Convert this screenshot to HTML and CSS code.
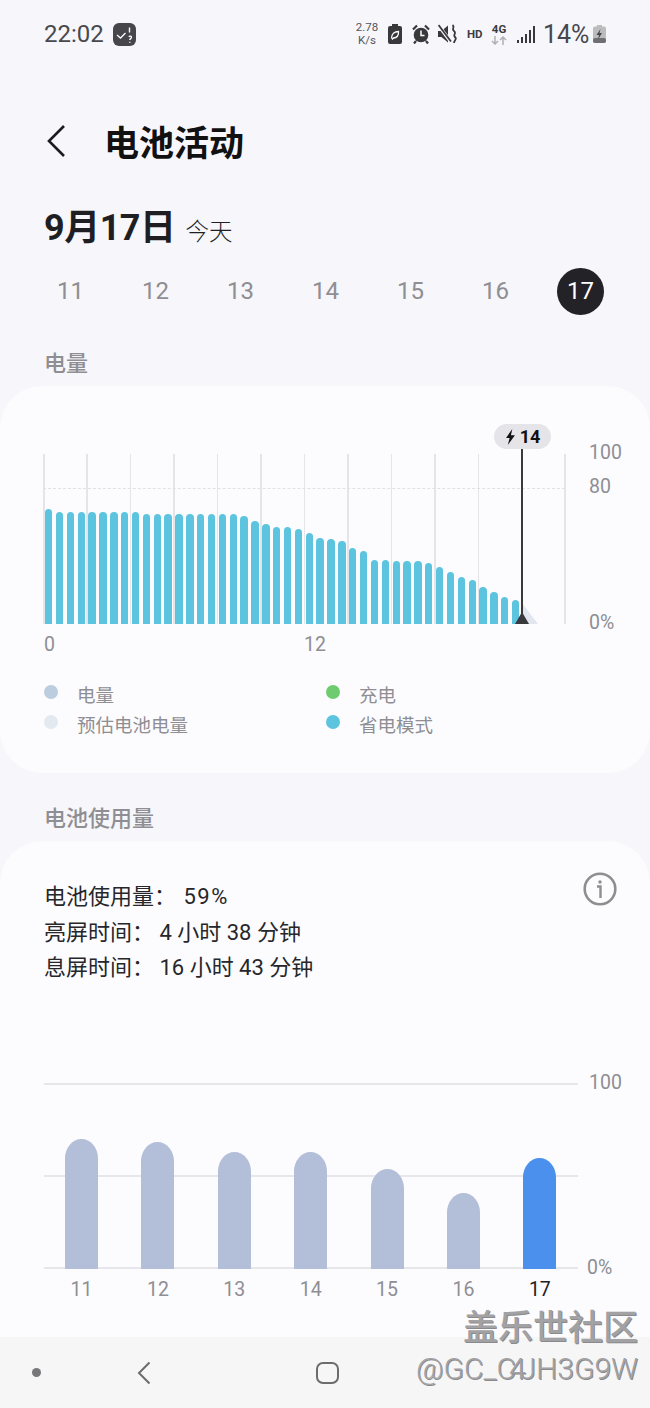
FILE: index.html
```html
<!DOCTYPE html>
<html lang="zh-CN">
<head>
    <meta charset="UTF-8">
    <title>电池活动</title>
    <link rel="stylesheet" href="styles.css">
</head>
<body>
<div class="phone">
    <div class="statusbar">
        <span class="clock">22:02</span>
        <svg class="notice" viewBox="0 0 23 23"><rect width="23" height="23" rx="6" fill="#47474b"/><path d="M4 12l3.500 3 5-5" fill="none" stroke="#fff" stroke-width="1.300"/><path d="M16.500 4.500v5M16 14c.5-1.500 3-1 2.300.8-.4.900-1.500 1-1.500 2.200M16.800 18.800v1" fill="none" stroke="#fff" stroke-width="1.400"/></svg>
        <div class="status-right">
            <span class="rate">2.78<br>K/s</span>
            <svg class="ico ico-saver" viewBox="0 0 14 20"><path d="M4 0h6v2h2a2 2 0 0 1 2 2v14a2 2 0 0 1-2 2H2a2 2 0 0 1-2-2V4a2 2 0 0 1 2-2h2z" fill="#39393c"/><path d="M3.500 14.500C3.500 10 6.500 7.500 10.500 7.500c.3 4-1.500 6.500-5 6.500l-1.500 1.500" fill="none" stroke="#fff" stroke-width="1.300"/></svg>
            <svg class="ico ico-alarm" viewBox="0 0 18 20"><circle cx="9" cy="11" r="7.300" fill="#39393c"/><path d="M9 6.500V11.500h3.500" fill="none" stroke="#fff" stroke-width="1.500"/><path d="M1 5.500L5 1.500M17 5.500L13 1.500M4 17l-2 2.500M14 17l2 2.500" stroke="#39393c" stroke-width="2.200"/></svg>
            <svg class="ico ico-mute" viewBox="0 0 19 20"><path d="M0 7h3.500L10 1.500v17L3.500 13H0z" fill="#39393c"/><path d="M0.500 1.500L13 18" stroke="#f6f6fb" stroke-width="3.500"/><path d="M0.500 1L13 17.500" stroke="#39393c" stroke-width="1.800"/><path d="M14.500 1c3 2.500-1.500 3.500 1.500 6s-1.500 3.500 1 6-1 3-1 6" fill="none" stroke="#39393c" stroke-width="1.800"/></svg>
            <span class="hd">HD</span>
            <span class="net">
                <span class="net-label">4G</span>
                <svg class="net-arrows" viewBox="0 0 16 9"><path d="M4 0v8M1 5l3 3 3-3" fill="none" stroke="#b1b1b4" stroke-width="1.500"/><path d="M12 9V1M9 4l3-3 3 3" fill="none" stroke="#b1b1b4" stroke-width="1.500"/></svg>
            </span>
            <svg class="ico ico-signal" viewBox="0 0 18 17"><g fill="#39393c"><rect x="0" y="14" width="2" height="3"/><rect x="4" y="11" width="2" height="6"/><rect x="8" y="8" width="2" height="9"/><rect x="12" y="4" width="2" height="13"/><rect x="16" y="0" width="2" height="17"/></g></svg>
            <span class="percent">14%</span>
            <svg class="ico ico-batt" viewBox="0 0 13 18"><path d="M4 0h5v1.500h2a2 2 0 0 1 2 2V16a2 2 0 0 1-2 2H2a2 2 0 0 1-2-2V3.500a2 2 0 0 1 2-2h2z" fill="#bcbcbf"/><rect y="13" width="13" height="5" rx="2" fill="#6f6f72"/><path d="M7.500 4L3.500 10h2.500l-1 4.500 4-6.500H6.500z" fill="#47474a"/></svg>
        </div>
    </div>

    <div class="titlebar">
        <svg class="back" viewBox="0 0 20 34"><path d="M18 2L3 17l15 15" fill="none" stroke="#1c1c1e" stroke-width="2.600"/></svg>
        <h1>电池活动</h1>
    </div>

    <div class="date-head"><b>9月17日</b><span>今天</span></div>

    <ul class="days">
        <li>11</li>
        <li>12</li>
        <li>13</li>
        <li>14</li>
        <li>15</li>
        <li>16</li>
        <li class="on">17</li>
    </ul>

    <h2 class="section first">电量</h2>
    <div class="card level-card">
        <div class="level-plot">
            <div class="level-grid">
                <i></i><i></i><i></i><i></i><i></i><i></i><i></i><i></i><i></i><i></i><i></i><i></i><i></i>
            </div>
            <div class="level-dash"></div>
            <div class="level-bars">
                <i style="height:115px"></i><i style="height:112px"></i><i style="height:112px"></i><i style="height:112px"></i>
                <i style="height:112px"></i><i style="height:112px"></i><i style="height:112px"></i><i style="height:112px"></i>
                <i style="height:112px"></i><i style="height:110px"></i><i style="height:110px"></i><i style="height:110px"></i>
                <i style="height:110px"></i><i style="height:110px"></i><i style="height:110px"></i><i style="height:110px"></i>
                <i style="height:110px"></i><i style="height:110px"></i><i style="height:108px"></i><i style="height:103px"></i>
                <i style="height:100px"></i><i style="height:97px"></i><i style="height:97px"></i><i style="height:95px"></i>
                <i style="height:91px"></i><i style="height:86px"></i><i style="height:85px"></i><i style="height:83px"></i>
                <i style="height:76px"></i><i style="height:73px"></i><i style="height:64px"></i><i style="height:64px"></i>
                <i style="height:63px"></i><i style="height:63px"></i><i style="height:63px"></i><i style="height:61px"></i>
                <i style="height:57px"></i><i style="height:52px"></i><i style="height:47px"></i><i style="height:44px"></i>
                <i style="height:37px"></i><i style="height:32px"></i><i style="height:27px"></i><i style="height:24px"></i>
            </div>
            <svg class="marker" viewBox="0 0 30 176"><path d="M8 176L9 155 25 176z" fill="#e2e6ee"/><rect x="8" y="0" width="2" height="176" fill="#3a3a3e"/><path d="M2 176l7-12 7 12z" fill="#3a3a3e"/></svg>
            <div class="pill"><svg class="bolt" viewBox="0 0 12 18"><path d="M8 0L1 10h4l-2 8 8-11H6.500z" fill="#111"/></svg>14</div>
            <span class="axis y100">100</span>
            <span class="axis y80">80</span>
            <span class="axis y0">0%</span>
        </div>
        <div class="hours"><span>0</span><span>12</span></div>
        <ul class="legend">
            <li><i class="dot c-level"></i>电量</li>
            <li><i class="dot c-charge"></i>充电</li>
            <li><i class="dot c-est"></i>预估电池电量</li>
            <li><i class="dot c-saver"></i>省电模式</li>
        </ul>
    </div>

    <h2 class="section second">电池使用量</h2>
    <div class="card usage-card">
        <div class="usage-head">
            <div class="usage-text">
                <p>电池使用量： <span class="pct">59%</span></p>
                <p>亮屏时间： 4 小时 38 分钟</p>
                <p>息屏时间： 16 小时 43 分钟</p>
            </div>
            <svg class="info" viewBox="0 0 34 34"><circle cx="17" cy="17" r="15.300" fill="none" stroke="#8e8e92" stroke-width="2.600"/><circle cx="17" cy="10" r="1.700" fill="#8e8e92"/><path d="M14 14.500h3.500V26" fill="none" stroke="#8e8e92" stroke-width="2.400"/></svg>
        </div>
        <div class="usage-plot">
            <div class="usage-lines"><i></i><i></i><i></i></div>
            <div class="usage-bars">
                <i style="height:130px"></i>
                <i style="height:127px"></i>
                <i style="height:117px"></i>
                <i style="height:117px"></i>
                <i style="height:100px"></i>
                <i style="height:76px"></i>
                <i class="today" style="height:111px"></i>
            </div>
            <span class="axis u100">100</span>
            <span class="axis u0">0%</span>
        </div>
        <div class="usage-days">
            <span>11</span><span>12</span><span>13</span><span>14</span><span>15</span><span>16</span><span class="today">17</span>
        </div>
    </div>

    <div class="navbar">
        <i class="nav-dot"></i>
        <svg class="nav-back" viewBox="0 0 14 24"><path d="M12.500 1.500L2 12l10.500 10.500" fill="none" stroke="#6c6c6f" stroke-width="2"/></svg>
        <i class="nav-home"></i>
    </div>

    <div class="watermark">
        <div class="wm-cn">盖乐世社区</div>
        <div class="wm-id">@GC_C<span class="wm-tight">4</span>JH3G9W</div>
    </div>
</div>
</body>
</html>
```
FILE: styles.css
```css
* {
    margin: 0;
    padding: 0;
    border: 0;
    list-style: none;
    box-sizing: border-box;
}
html, body {
    height: 100%;
}
body {
    background: #f6f6fb;
    font-family: Roboto, "Noto Sans CJK SC", sans-serif;
}
i {
    display: block;
}
.phone {
    width: 650px;
    height: 1408px;
    position: relative;
    overflow: hidden;
    display: flex;
    flex-direction: column;
}

/* status bar */
.statusbar {
    height: 68px;
    flex: none;
    display: flex;
    align-items: center;
    padding: 0 44px;
}
.clock {
    font-size: 24px;
    color: #49494d;
}
.notice {
    width: 23px;
    height: 23px;
    margin-left: 9px;
}
.status-right {
    margin-left: auto;
    display: flex;
    align-items: center;
    color: #3c3c40;
}
.rate {
    width: 24px;
    font-size: 11.500px;
    line-height: 13px;
    text-align: center;
    color: #55555a;
}
.ico {
    display: block;
}
.ico-saver {
    width: 14px;
    height: 20px;
    margin-left: 9px;
}
.ico-alarm {
    width: 18px;
    height: 20px;
    margin-left: 10px;
}
.ico-mute {
    width: 19px;
    height: 20px;
    margin-left: 8px;
}
.hd {
    font-size: 11.500px;
    font-weight: 700;
    width: 17px;
    margin-left: 10px;
}
.net {
    width: 16px;
    margin-left: 7px;
    display: flex;
    flex-direction: column;
    align-items: center;
}
.net-label {
    font-size: 11.500px;
    font-weight: 700;
    line-height: 11px;
}
.net-arrows {
    width: 16px;
    height: 9px;
    margin-top: 1px;
}
.ico-signal {
    width: 18px;
    height: 17px;
    margin-left: 10px;
}
.percent {
    font-size: 25px;
    width: 46px;
    margin-left: 8px;
    color: #48484c;
}
.ico-batt {
    width: 13px;
    height: 18px;
    margin-left: 4px;
}

/* title */
.titlebar {
    height: 46px;
    margin-top: 50px;
    margin-top: 50px;
    flex: none;
    display: flex;
    align-items: center;
    padding-left: 46px;
    margin-top: 50px;
}
.back {
    width: 20px;
    height: 34px;
}
h1 {
    font-size: 35px;
    line-height: 46px;
    font-weight: 700;
    color: #111;
    margin-left: 38px;
    font-family: "Noto Sans CJK SC", sans-serif;
}
.date-head {
    flex: none;
    height: 52px;
    margin-top: 40px;
    margin-top: 38px;
    padding-left: 44px;
    display: flex;
    align-items: baseline;
    color: #1f1f23;
}
.date-head b {
    font-size: 36px;
    line-height: 52px;
    font-weight: 700;
    letter-spacing: -0.500px;
}
.date-head span {
    font-size: 23.500px;
    margin-left: 10px;
    font-family: "Noto Sans CJK SC", sans-serif;
    font-weight: 300;
}
.days {
    flex: none;
    display: flex;
    margin-top: 14px;
    padding-left: 28px;
    height: 47px;
}
.days li {
    width: 85px;
    text-align: center;
    font-size: 24px;
    line-height: 47px;
    color: #8e8e93;
}
.days li.on {
    width: 47px;
    margin-left: 19px;
    border-radius: 50%;
    background: #232327;
    color: #fff;
}
.section {
    flex: none;
    padding-left: 44px;
    font-size: 22px;
    line-height: 30px;
    font-weight: 500;
    color: #8e8e93;
    font-family: "Noto Sans CJK SC", sans-serif;
}
.section.first {
    margin-top: 31px;
}
.section.second {
    margin-top: 28px;
}

/* cards */
.card {
    flex: none;
    background: #fcfcff;
    border-radius: 42px;
}
.level-card {
    height: 387px;
    margin-top: 10px;
    padding-top: 38px;
}
.level-plot {
    position: relative;
    height: 200px;
}
.level-grid {
    position: absolute;
    left: 43px;
    top: 30px;
    bottom: 0;
    width: 523px;
    display: flex;
    justify-content: space-between;
}
.level-grid i {
    width: 1.500px;
    background: #e4e4e9;
}
.level-dash {
    position: absolute;
    left: 43px;
    top: 64px;
    width: 522px;
    border-top: 1.500px dashed #e0e0e6;
}
.level-bars {
    position: relative;
    height: 100%;
    padding-left: 45px;
    display: flex;
    align-items: flex-end;
    gap: 3.470px;
}
.level-bars i {
    width: 7.400px;
    background: #5cc4df;
    border-radius: 4px 4px 0 0;
}
.marker {
    position: absolute;
    left: 513px;
    top: 24px;
    width: 30px;
    height: 176px;
}
.pill {
    position: absolute;
    left: 494px;
    top: 0;
    width: 57px;
    height: 25px;
    border-radius: 13px;
    background: #e4e4e9;
    display: flex;
    align-items: center;
    justify-content: center;
    font-size: 18px;
    font-weight: 700;
    color: #111;
}
.bolt {
    width: 11px;
    height: 16px;
    margin-right: 4px;
}
.axis {
    position: absolute;
    font-size: 19.500px;
    line-height: 22px;
    color: #8e8e93;
}
.y100 {
    left: 589px;
    top: 18px;
}
.y80 {
    left: 589px;
    top: 52px;
}
.y0 {
    left: 589px;
    top: 188px;
}
.hours {
    height: 22px;
    margin-top: 10px;
    padding-left: 44px;
    display: flex;
    font-size: 19.500px;
    line-height: 22px;
    color: #8e8e93;
}
.hours span:last-child {
    margin-left: 249px;
}
.legend {
    display: grid;
    grid-template-columns: 282px 1fr;
    grid-auto-rows: 30px;
    margin-top: 23px;
    padding-left: 44px;
    font-size: 18.500px;
    line-height: 30px;
    color: #8e8e93;
    font-family: "Noto Sans CJK SC", sans-serif;
}
.legend li {
    display: flex;
    align-items: center;
}
.dot {
    width: 14px;
    height: 14px;
    border-radius: 50%;
    margin-right: 19px;
    position: relative;
    top: -2px;
}
.c-level {
    background: #bccde0;
}
.c-charge {
    background: #6fcb6f;
}
.c-est {
    background: #e3e9f1;
}
.c-saver {
    background: #5cc4df;
}

.usage-card {
    flex: 1;
    margin-top: 10px;
    border-radius: 42px 42px 0 0;
    padding: 38px 0 0 44px;
}
.usage-head {
    height: 204px;
    position: relative;
}
.usage-text p {
    font-size: 22px;
    line-height: 35.500px;
    color: #27272b;
    white-space: nowrap;
    font-family: Roboto, "Noto Sans CJK SC", sans-serif;
}
.pct {
    margin-left: 2px;
    letter-spacing: 1.500px;
}
.info {
    position: absolute;
    right: 33px;
    top: -7px;
    width: 34px;
    height: 34px;
}
.usage-plot {
    position: relative;
    width: 534px;
    height: 186px;
}
.usage-lines {
    position: absolute;
    inset: 0;
    display: flex;
    flex-direction: column;
    justify-content: space-between;
}
.usage-lines i {
    height: 2px;
    background: #e6e6eb;
}
.usage-bars {
    position: relative;
    height: 100%;
    padding-left: 21px;
    display: flex;
    align-items: flex-end;
    gap: 43.400px;
}
.usage-bars i {
    width: 33px;
    background: #b3bfd8;
    border-radius: 17px 17px 0 0 / 20px 20px 0 0;
}
.usage-bars i.today {
    background: #4a90ec;
}
.u100 {
    left: 545px;
    top: -11px;
}
.u0 {
    left: 543px;
    top: 174px;
}
.usage-days {
    display: flex;
    padding-left: 21px;
    gap: 43.400px;
    margin-top: 9px;
    font-size: 19.500px;
    line-height: 24px;
    color: #8e8e93;
}
.usage-days span {
    width: 33px;
    text-align: center;
}
.usage-days .today {
    color: #222;
}

/* nav */
.navbar {
    position: absolute;
    left: 0;
    right: 0;
    bottom: 0;
    height: 71px;
    background: #f6f6f7;
    display: flex;
    align-items: center;
    padding-left: 32px;
}
.nav-dot {
    width: 9px;
    height: 9px;
    border-radius: 50%;
    background: #77777a;
}
.nav-back {
    width: 14px;
    height: 24px;
    margin-left: 96px;
}
.nav-home {
    width: 23px;
    height: 22px;
    margin-left: 165px;
    border: 2px solid #6c6c6f;
    border-radius: 7px;
}

/* watermark on top of everything */
.watermark {
    position: absolute;
    right: 12px;
    top: 1303px;
    text-align: right;
    color: #a2a2a4;
    text-shadow: 1px 1px 0 #8a8a8c;
}
.wm-cn {
    font-size: 35px;
    line-height: 44px;
    font-weight: 500;
    font-family: "Noto Sans CJK SC", sans-serif;
}
.wm-id {
    font-size: 30px;
    line-height: 40px;
    margin-top: 2px;
    font-weight: 300;
    white-space: nowrap;
}
.wm-tight {
    margin: 0 -6px 0 -7px;
}
```
